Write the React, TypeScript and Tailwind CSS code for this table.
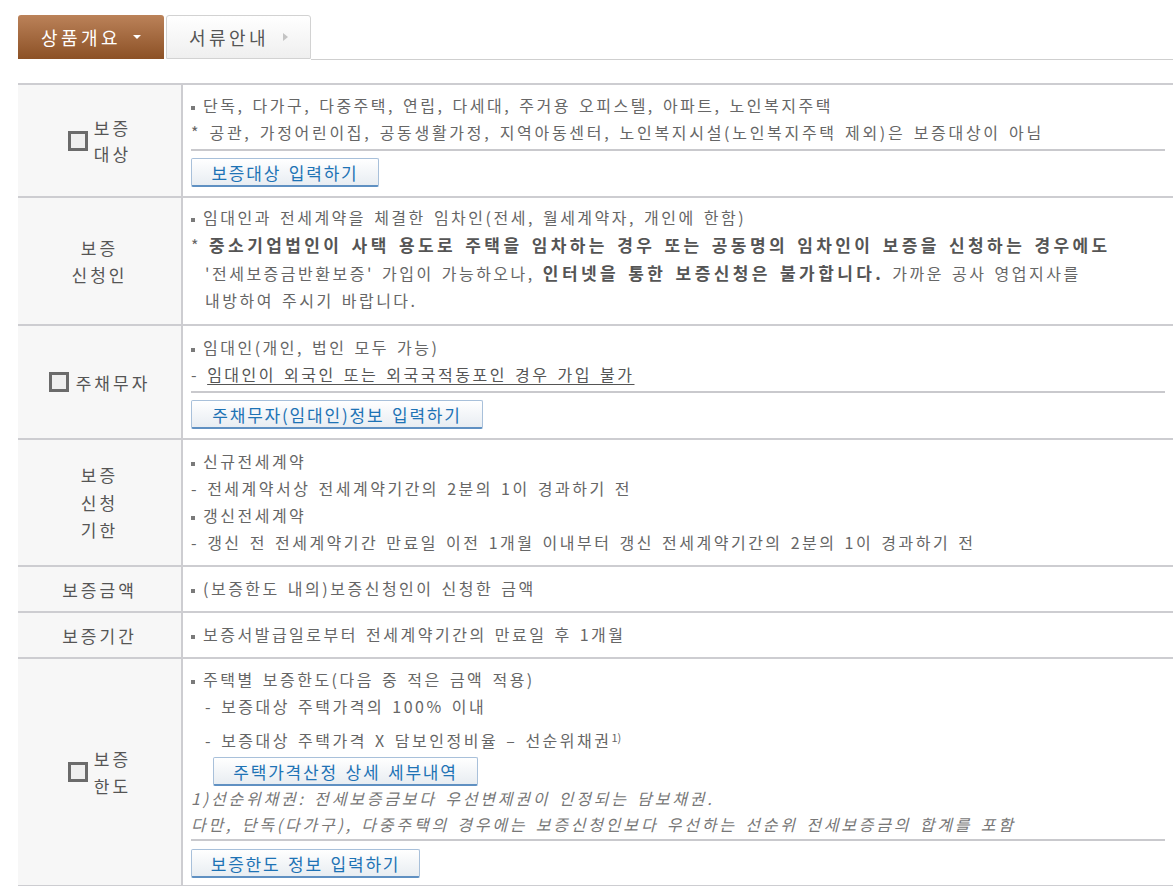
import type { ReactNode } from 'react';

const Bullet = () => (
  <span className="inline-block w-[4px] h-[4px] bg-[#7a7a7a] mr-[8px] align-middle" />
);

const Check = () => (
  <span className="inline-block w-[20px] h-[20px] border-[3px] border-[#6b6b6b] bg-[#efefef] shrink-0" />
);

const Divider = ({ className = '' }: { className?: string }) => (
  <div className={`h-[2px] bg-[#c9c9cd] mr-[8px] ${className}`} />
);

function Btn({ children, className = '' }: { children: ReactNode; className?: string }) {
  return (
    <button
      className={`h-[29px] flex items-center justify-center rounded-[2px] border border-[#a8c0da] border-b-[2px] border-b-[#5f90c2] bg-linear-to-b from-white to-[#e8edf2] text-[17px] tracking-[1.8px] text-[#1e73b5] [word-spacing:2px] ${className}`}
    >
      {children}
    </button>
  );
}

function Row({ label, children, className = '' }: { label: ReactNode; children: ReactNode; className?: string }) {
  return (
    <div className="grid grid-cols-[165px_1fr] border-b-2 border-[#cdcdd1]">
      <div className="bg-[#f7f7f7] border-r-2 border-[#cdcdd1] flex items-center justify-center text-[17px] tracking-[3px] text-[#555]">
        {label}
      </div>
      <div className={`pl-[8px] ${className}`}>{children}</div>
    </div>
  );
}

export default function App() {
  return (
    <div className="min-h-screen bg-white pt-[15px] pl-[18px] font-['Noto_Sans_CJK_KR','Noto_Sans',sans-serif] text-[16px] leading-[27px] tracking-[2.5px] text-[#666] [word-spacing:2px]">
      {/* Tabs */}
      <div className="flex h-[44px]">
        <div className="w-[146px] rounded-t-[3px] bg-linear-to-b from-[#bb8259] to-[#8c5125] flex items-center justify-center gap-[12px] text-white text-[18px] tracking-[3.5px]">
          <span>상품개요</span>
          <span className="w-0 h-0 border-x-[4px] border-x-transparent border-t-[4px] border-t-white" />
        </div>
        <div className="ml-[2px] w-[145px] rounded-t-[3px] border border-[#d2d2d2] bg-linear-to-b from-white to-[#efefef] flex items-center justify-center gap-[14px] text-[#555] text-[18px] tracking-[3.5px]">
          <span>서류안내</span>
          <span className="w-0 h-0 border-y-[4px] border-y-transparent border-l-[5px] border-l-[#c4c4c4]" />
        </div>
        <div className="flex-1 border-b border-[#cfcfcf] -mb-[1px]" />
      </div>

      {/* Table */}
      <div className="mt-[24px] border-t-2 border-[#cdcdd1]">
        <Row
          className="pt-[7px] pb-[9px]"
          label={
            <div className="flex items-center gap-[6px] leading-[26px]">
              <Check />
              <div>
                <div>보증</div>
                <div>대상</div>
              </div>
            </div>
          }
        >
          <div className="whitespace-nowrap"><Bullet />단독, 다가구, 다중주택, 연립, 다세대, 주거용 오피스텔, 아파트, 노인복지주택</div>
          <div className="whitespace-nowrap tracking-[2.7px]">* 공관, 가정어린이집, 공동생활가정, 지역아동센터, 노인복지시설(노인복지주택 제외)은 보증대상이 아님</div>
          <Divider className="mt-[3px]" />
          <Btn className="mt-[7px] w-[188px]">보증대상 입력하기</Btn>
        </Row>

        <Row
          className="pt-[6px] pb-[10px]"
          label={
            <div className="text-center">
              <div>보증</div>
              <div>신청인</div>
            </div>
          }
        >
          <div className="whitespace-nowrap"><Bullet />임대인과 전세계약을 체결한 임차인(전세, 월세계약자, 개인에 한함)</div>
          <div className="whitespace-nowrap">
            *{' '}
            <b className="text-[17px] tracking-[3.4px] text-[#555]">중소기업법인이 사택 용도로 주택을 임차하는 경우 또는 공동명의 임차인이 보증을 신청하는 경우에도</b>
          </div>
          <div className="whitespace-nowrap pl-[14px]">
            '전세보증금반환보증' 가입이 가능하오나,{' '}
            <b className="text-[17px] tracking-[3.4px] text-[#555]">인터넷을 통한 보증신청은 불가합니다.</b> 가까운 공사 영업지사를
          </div>
          <div className="whitespace-nowrap pl-[14px]">내방하여 주시기 바랍니다.</div>
        </Row>

        <Row
          className="pt-[8px] pb-[9px]"
          label={
            <div className="flex items-center gap-[7px]">
              <Check />
              <span>주채무자</span>
            </div>
          }
        >
          <div className="whitespace-nowrap"><Bullet />임대인(개인, 법인 모두 가능)</div>
          <div className="whitespace-nowrap">
            - <span className="underline underline-offset-[3px] text-[#555]">임대인이 외국인 또는 외국국적동포인 경우 가입 불가</span>
          </div>
          <Divider className="mt-[3px]" />
          <Btn className="mt-[7px] w-[292px]">주채무자(임대인)정보 입력하기</Btn>
        </Row>

        <Row
          className="pt-[8px] pb-[9px]"
          label={
            <div className="text-center leading-[27.5px]">
              <div>보증</div>
              <div>신청</div>
              <div>기한</div>
            </div>
          }
        >
          <div className="whitespace-nowrap"><Bullet />신규전세계약</div>
          <div className="whitespace-nowrap">- 전세계약서상 전세계약기간의 2분의 1이 경과하기 전</div>
          <div className="whitespace-nowrap"><Bullet />갱신전세계약</div>
          <div className="whitespace-nowrap">- 갱신 전 전세계약기간 만료일 이전 1개월 이내부터 갱신 전세계약기간의 2분의 1이 경과하기 전</div>
        </Row>

        <Row className="pt-[8px] pb-[9px]" label={<span>보증금액</span>}>
          <div className="whitespace-nowrap"><Bullet />(보증한도 내의)보증신청인이 신청한 금액</div>
        </Row>

        <Row className="pt-[8px] pb-[9px]" label={<span>보증기간</span>}>
          <div className="whitespace-nowrap"><Bullet />보증서발급일로부터 전세계약기간의 만료일 후 1개월</div>
        </Row>

        <Row
          className="pt-[7px] pb-[7px]"
          label={
            <div className="flex items-center gap-[6px] leading-[27px]">
              <Check />
              <div>
                <div>보증</div>
                <div>한도</div>
              </div>
            </div>
          }
        >
          <div className="whitespace-nowrap"><Bullet />주택별 보증한도(다음 중 적은 금액 적용)</div>
          <div className="whitespace-nowrap pl-[14px]">- 보증대상 주택가격의 100% 이내</div>
          <div className="whitespace-nowrap pl-[14px] mt-[7px]">
            - 보증대상 주택가격 X 담보인정비율 – 선순위채권<sup className="text-[11px] tracking-normal">1)</sup>
          </div>
          <Btn className="mt-[3px] ml-[22px] w-[265px]">주택가격산정 상세 세부내역</Btn>
          <div className="italic text-[#777] leading-[26px] tracking-[2.8px] -mt-[1px]">
            <div className="whitespace-nowrap">1)선순위채권: 전세보증금보다 우선변제권이 인정되는 담보채권.</div>
            <div className="whitespace-nowrap">다만, 단독(다가구), 다중주택의 경우에는 보증신청인보다 우선하는 선순위 전세보증금의 합계를 포함</div>
          </div>
          <Divider className="mt-[2px]" />
          <Btn className="mt-[8px] w-[229px]">보증한도 정보 입력하기</Btn>
        </Row>
      </div>
    </div>
  );
}
